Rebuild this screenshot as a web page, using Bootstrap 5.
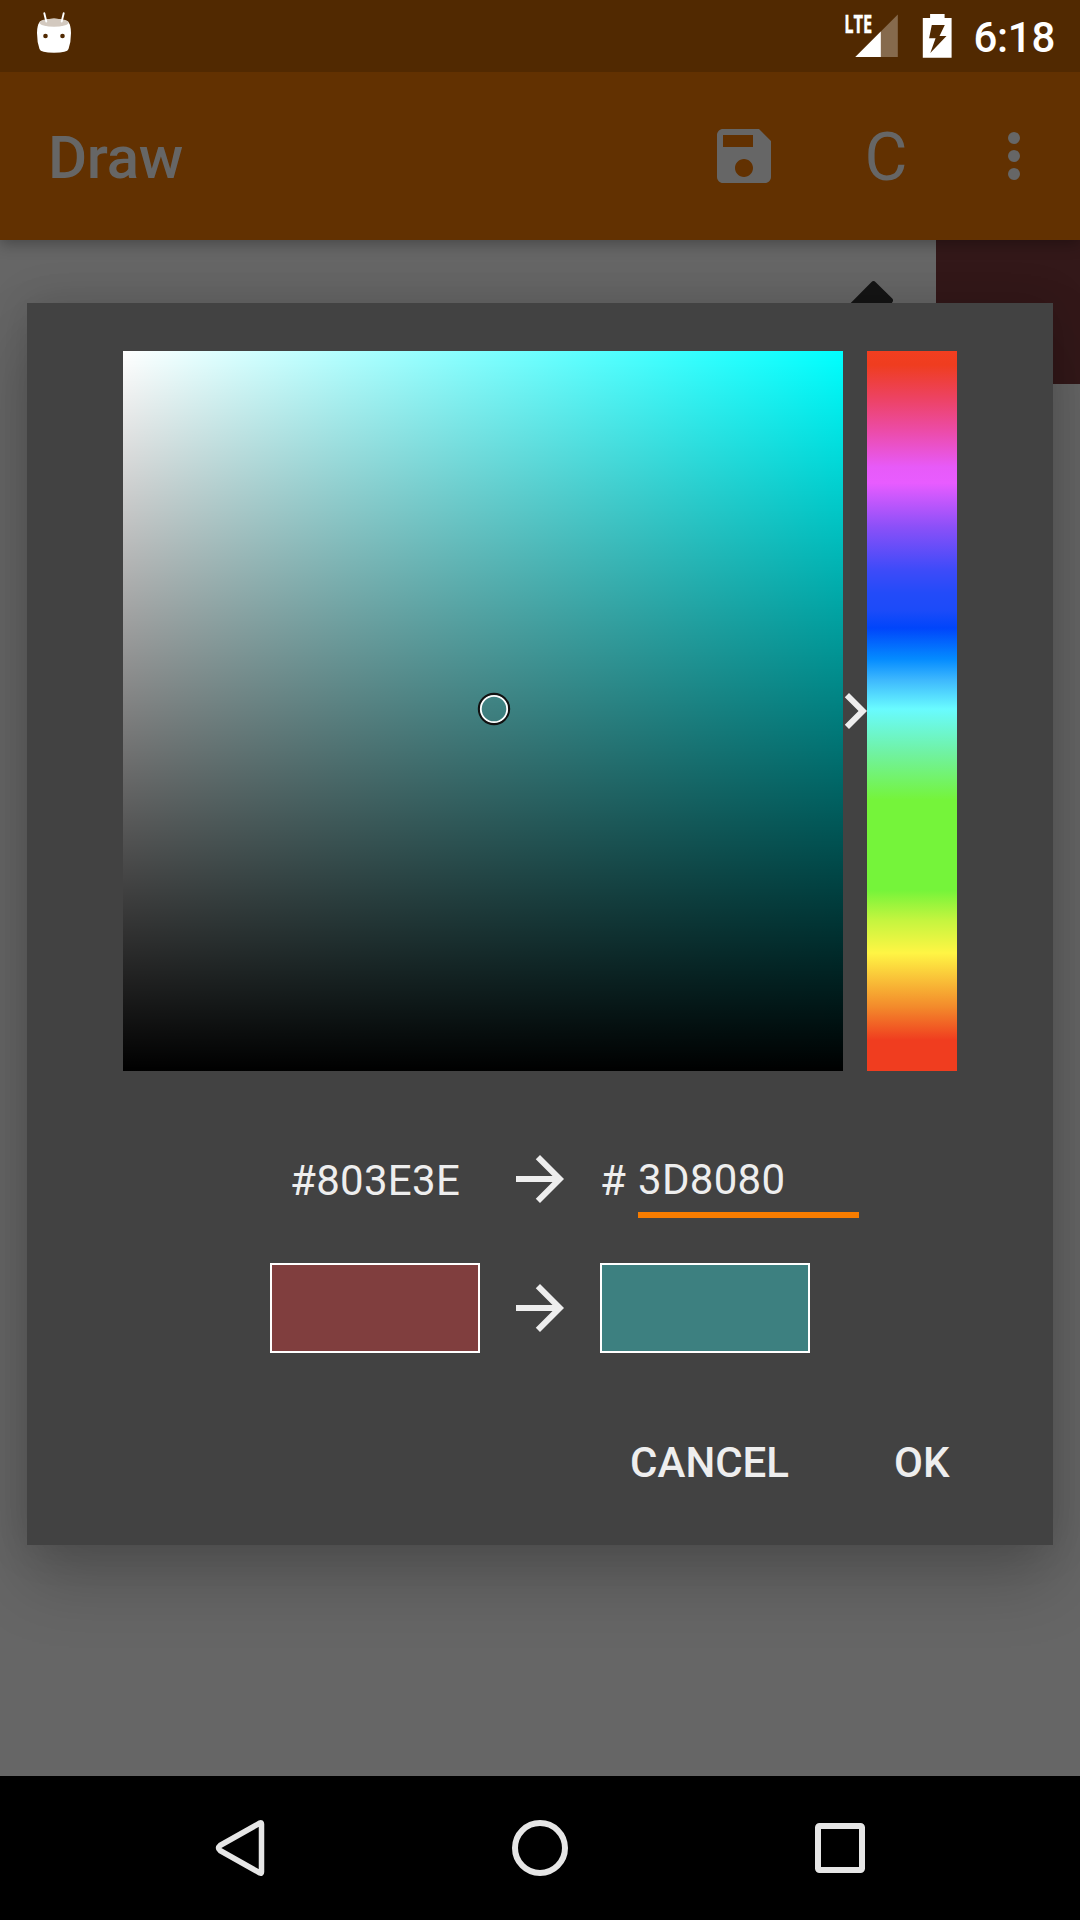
<!DOCTYPE html>
<html lang="en">
<head>
<meta charset="utf-8">
<meta name="viewport" content="width=device-width, initial-scale=1">
<title>Draw</title>
<link rel="stylesheet" href="https://cdn.jsdelivr.net/npm/bootstrap@5.3.0/dist/css/bootstrap.min.css">
<style>
  body { font-family: Roboto, "Liberation Sans", sans-serif; width: 1080px; height: 1920px; background: #666; }
  svg { display: block; flex: none; }
  .status-bar { height: 72px; background: #512901; padding: 0 25px 0 36px; color: #fff; z-index: 3; }
  .clock { font-size: 42px; line-height: 72px; font-weight: 500; padding-top: 2px; letter-spacing: -.3px; }
  .app-bar { height: 168px; background: #623101; color: #666; padding: 0 30px 0 48px; box-shadow: 0 4px 14px rgba(0,0,0,.3); z-index: 2; }
  .app-title { font-size: 60px; font-weight: 500; line-height: 168px; padding-top: 2px; letter-spacing: -.3px; }
  .clear-btn { font-size: 66px; line-height: 168px; width: 108px; padding-top: 2px; color: #666; margin: 0 38px 0 52px; }
  .surface { background: #666; }
  .current-color { width: 144px; height: 144px; background: #331819; }
  .pencil { left: 846px; top: 40px; }
  .picker { left: 27px; top: 63px; width: 1026px; height: 1242px; background: #424242; padding: 48px 96px 0; color: #eee;
    box-shadow: 0 36px 64px rgba(0,0,0,.2), 0 0 42px rgba(0,0,0,.14); }
  .sat-val { width: 720px; height: 720px; background: linear-gradient(to top, #000, transparent), linear-gradient(to right, #fff, #0ff); }
  .sv-cursor { left: 354px; top: 341px; }
  .hue-arrow { left: 696px; top: 324px; }
  .hue-bar { width: 90px; height: 720px; background: linear-gradient(to bottom,
    #f23e20 0, #ef3d1f 14px, #ed4260 46px, #ec4ba6 79px, #e75af8 116px, #e85cff 132px, #8b50f8 176px,
    #3f4bf9 218px, #234bf9 242px, #1c4bf9 259px, #0045fb 277px, #048bff 308px, #3eb8fd 329px, #69fbff 358px,
    #70f2a4 401px, #75f43a 449px, #75f43a 539px, #c4f53f 569px, #fff544 602px, #f38a2b 656px, #f03d1f 689px, #f03d1f 720px); }
  .hex-row { margin-top: 72px; height: 72px; padding-left: 147px; font-size: 42px; line-height: 72px; letter-spacing: .3px; }
  .swatch-row { margin-top: 48px; height: 90px; padding-left: 147px; }
  .cell { width: 210px; height: 72px; }
  .cell-text { padding-top: 2px; padding-left: 20px; }
  .hash { width: 38px; padding-top: 2px; }
  .hex-input { width: 221px; height: 75px; padding-top: 1px; border-bottom: 6px solid #f77c00; }
  .swatch { width: 210px; height: 90px; border: 2px solid #fff; }
  .old-color { background: #803e3e; }
  .new-color { background: #3d8080; }
  .actions { margin-top: 72px; height: 72px; font-size: 42px; font-weight: 500; line-height: 72px; padding-right: 7.5px; gap: 105px; padding-top: 2px;}
  .nav-keys { height: 144px; background: #000; padding-left: 204px; padding-right: 204px; }
</style>
</head>
<body class="d-flex flex-column overflow-hidden m-0">
  <header class="status-bar position-relative d-flex align-items-start justify-content-between flex-shrink-0">
    <svg width="36" height="72" viewBox="36 0 36 72">
      <path d="M37 33q0-8 3-11.500q14-6 28 0q3 3.500 3 11.500q0 9-2.500 16q-1 3.800-14.500 3.800t-14.500-3.800q-2.500-7-2.500-16z" fill="#fff"/>
      <ellipse cx="54" cy="22.700" rx="14.500" ry="4" fill="#d3c9bf"/>
      <path d="M44.300 13.200l2 8.300M63.700 13.200l-2 8.300" stroke="#fff" stroke-width="1.900" stroke-linecap="round"/>
      <circle cx="45.500" cy="36" r="2.300" fill="#512901"/><circle cx="62.500" cy="36" r="2.300" fill="#512901"/>
    </svg>
    <div class="d-flex">
      <svg width="130" height="72" viewBox="844.200 0 130 72">
        <text x="844.500" y="33" font-family="Open Sans, sans-serif" font-size="25" font-weight="700" textLength="28" lengthAdjust="spacingAndGlyphs" fill="#fff" stroke="#fff" stroke-width=".4">LTE</text>
        <path d="M898 14.500V57h-42.500z" fill="#866a4d"/>
        <path d="M881 31.500V57h-25.500z" fill="#fff"/>
        <path fill-rule="evenodd" d="M930.300 14h14.500v4h7v39.700h-28.800v-39.700h7.300zM932 25l-2.700 13.300h6.500l-5.300 14.700 16.200-17h-7l5.300-11z" fill="#fff"/>
      </svg>
      <span class="clock">6:18</span>
    </div>
  </header>

  <nav class="app-bar navbar d-flex flex-nowrap align-items-start justify-content-between flex-shrink-0">
    <span class="app-title">Draw</span>
    <div class="d-flex align-items-start">
      <svg width="72" height="168" viewBox="0 -16 24 56"><path fill="#666" d="M17 3H5c-1.110 0-2 .9-2 2v14c0 1.100.89 2 2 2h14c1.100 0 2-.9 2-2V7l-4-4zm-5 16c-1.660 0-3-1.340-3-3s1.340-3 3-3 3 1.340 3 3-1.340 3-3 3zm3-10H5V5h10v4z"/></svg>
      <span class="clear-btn text-center">C</span>
      <svg width="72" height="168" viewBox="978 72 72 168" fill="#666"><circle cx="1014" cy="138" r="6"/><circle cx="1014" cy="156" r="6"/><circle cx="1014" cy="174" r="6"/></svg>
    </div>
  </nav>

  <main class="surface position-relative flex-grow-1 overflow-hidden">
    <div class="current-color ms-auto"></div>
    <svg class="pencil position-absolute" width="52" height="40" viewBox="846 280 52 40"><path fill="#151515" d="M834 320L871.300 282.200q2.200-2.200 4.400 0L892 298.300q2.200 2.200 0 4.400L876 320z"/></svg>

    <section class="picker position-absolute">
      <div class="d-flex gap-4 position-relative">
        <div class="sat-val"></div>
        <div class="hue-bar"></div>
        <svg class="sv-cursor position-absolute" width="34" height="34" viewBox="0 0 34 34" fill="none"><circle cx="17" cy="17" r="15" stroke="#111" stroke-width="2.400"/><circle cx="17" cy="17" r="13.200" stroke="#fff" stroke-width="1.800"/></svg>
        <svg class="hue-arrow position-absolute" width="72" height="72" viewBox="0 0 24 24"><path fill="#eee" d="M10 6L8.590 7.410 13.170 12l-4.580 4.590L10 18l6-6z"/></svg>
      </div>
      <div class="hex-row d-flex align-items-start gap-4">
        <div class="cell cell-text">#803E3E</div>
        <svg width="72" height="72" viewBox="0 0 24 24"><path fill="#eee" d="M12 4l-1.410 1.410L16.170 11H4v2h12.170l-5.580 5.590L12 20l8-8z"/></svg>
        <div class="d-flex">
          <div class="hash">#</div>
          <div class="hex-input">3D8080</div>
        </div>
      </div>
      <div class="swatch-row d-flex align-items-center gap-4">
        <div class="swatch old-color"></div>
        <svg width="72" height="72" viewBox="0 0 24 24"><path fill="#eee" d="M12 4l-1.410 1.410L16.170 11H4v2h12.170l-5.580 5.590L12 20l8-8z"/></svg>
        <div class="swatch new-color"></div>
      </div>
      <div class="actions d-flex justify-content-end">
        <span>CANCEL</span>
        <span>OK</span>
      </div>
    </section>
  </main>

  <footer class="nav-keys d-flex align-items-center justify-content-between flex-shrink-0">
    <svg width="72" height="72" viewBox="204 1812 72 72"><path d="M260 1823Q261.500 1822.200 261.500 1824V1872Q261.500 1874 260 1873L220 1850.500Q217 1848 220 1845.500Z" fill="none" stroke="#e6e6e6" stroke-width="5.500" stroke-linejoin="round"/></svg>
    <svg width="72" height="72" viewBox="504 1812 72 72"><circle cx="540" cy="1848" r="25" fill="none" stroke="#e6e6e6" stroke-width="6"/></svg>
    <svg width="72" height="72" viewBox="804 1812 72 72"><rect x="818" y="1826" width="44" height="44" rx="1.500" fill="none" stroke="#e6e6e6" stroke-width="6"/></svg>
  </footer>
<script src="https://cdn.jsdelivr.net/npm/bootstrap@5.3.0/dist/js/bootstrap.bundle.min.js"></script>
</body>
</html>
